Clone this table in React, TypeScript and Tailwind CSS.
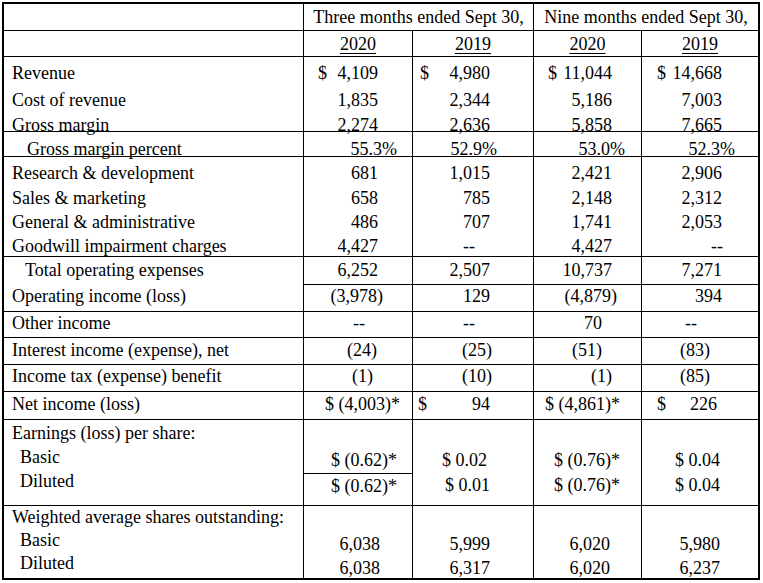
import React from 'react';

type V = { t: string; pr: string; d?: string };
type Row = { label: string; lpl: string; h: string; pt: string; b: 'all' | 'vals' | 'none'; v: V[] };

const COLW = [
  'w-[109px] border-r border-black',
  'w-[121px] border-r border-black',
  'w-[108px] border-r border-black',
  'w-[116px]',
];

const rows: Row[] = [
  {
    label: 'Revenue', lpl: 'pl-[8px]', h: 'h-[30px]', pt: 'pt-[7px]', b: 'none',
    v: [
      { t: '4,109', pr: 'pr-[34px]', d: 'pl-[14px]' },
      { t: '4,980', pr: 'pr-[43px]', d: 'pl-[7px]' },
      { t: '11,044', pr: 'pr-[29px]', d: 'pl-[14px]' },
      { t: '14,668', pr: 'pr-[36px]', d: 'pl-[15px]' },
    ],
  },
  {
    label: 'Cost of revenue', lpl: 'pl-[8px]', h: 'h-[25px]', pt: 'pt-[4px]', b: 'none',
    v: [
      { t: '1,835', pr: 'pr-[34px]' },
      { t: '2,344', pr: 'pr-[43px]' },
      { t: '5,186', pr: 'pr-[29px]' },
      { t: '7,003', pr: 'pr-[36px]' },
    ],
  },
  {
    label: 'Gross margin', lpl: 'pl-[8px]', h: 'h-[20px]', pt: 'pt-[4px]', b: 'all',
    v: [
      { t: '2,274', pr: 'pr-[34px]' },
      { t: '2,636', pr: 'pr-[43px]' },
      { t: '5,858', pr: 'pr-[29px]' },
      { t: '7,665', pr: 'pr-[36px]' },
    ],
  },
  {
    label: 'Gross margin percent', lpl: 'pl-[23px]', h: 'h-[25px]', pt: 'pt-[8px]', b: 'all',
    v: [
      { t: '55.3%', pr: 'pr-[15px]' },
      { t: '52.9%', pr: 'pr-[36px]' },
      { t: '53.0%', pr: 'pr-[16px]' },
      { t: '52.3%', pr: 'pr-[23px]' },
    ],
  },
  {
    label: 'Research & development', lpl: 'pl-[8px]', h: 'h-[26px]', pt: 'pt-[7px]', b: 'none',
    v: [
      { t: '681', pr: 'pr-[34px]' },
      { t: '1,015', pr: 'pr-[43px]' },
      { t: '2,421', pr: 'pr-[29px]' },
      { t: '2,906', pr: 'pr-[36px]' },
    ],
  },
  {
    label: 'Sales & marketing', lpl: 'pl-[8px]', h: 'h-[24px]', pt: 'pt-[6px]', b: 'none',
    v: [
      { t: '658', pr: 'pr-[34px]' },
      { t: '785', pr: 'pr-[43px]' },
      { t: '2,148', pr: 'pr-[29px]' },
      { t: '2,312', pr: 'pr-[36px]' },
    ],
  },
  {
    label: 'General & administrative', lpl: 'pl-[8px]', h: 'h-[24px]', pt: 'pt-[6px]', b: 'none',
    v: [
      { t: '486', pr: 'pr-[34px]' },
      { t: '707', pr: 'pr-[43px]' },
      { t: '1,741', pr: 'pr-[29px]' },
      { t: '2,053', pr: 'pr-[36px]' },
    ],
  },
  {
    label: 'Goodwill impairment charges', lpl: 'pl-[8px]', h: 'h-[26px]', pt: 'pt-[6px]', b: 'all',
    v: [
      { t: '4,427', pr: 'pr-[34px]' },
      { t: '--', pr: 'pr-[58px]' },
      { t: '4,427', pr: 'pr-[29px]' },
      { t: '--', pr: 'pr-[35px]' },
    ],
  },
  {
    label: 'Total operating expenses', lpl: 'pl-[21px]', h: 'h-[28px]', pt: 'pt-[4px]', b: 'vals',
    v: [
      { t: '6,252', pr: 'pr-[34px]' },
      { t: '2,507', pr: 'pr-[43px]' },
      { t: '10,737', pr: 'pr-[29px]' },
      { t: '7,271', pr: 'pr-[36px]' },
    ],
  },
  {
    label: 'Operating income (loss)', lpl: 'pl-[8px]', h: 'h-[27px]', pt: 'pt-[2px]', b: 'all',
    v: [
      { t: '(3,978)', pr: 'pr-[29px]' },
      { t: '129', pr: 'pr-[43px]' },
      { t: '(4,879)', pr: 'pr-[24px]' },
      { t: '394', pr: 'pr-[36px]' },
    ],
  },
  {
    label: 'Other income', lpl: 'pl-[8px]', h: 'h-[26px]', pt: 'pt-[2px]', b: 'all',
    v: [
      { t: '--', pr: 'pr-[47px]' },
      { t: '--', pr: 'pr-[58px]' },
      { t: '70', pr: 'pr-[39px]' },
      { t: '--', pr: 'pr-[61px]' },
    ],
  },
  {
    label: 'Interest income (expense), net', lpl: 'pl-[8px]', h: 'h-[27px]', pt: 'pt-[3px]', b: 'all',
    v: [
      { t: '(24)', pr: 'pr-[35px]' },
      { t: '(25)', pr: 'pr-[41px]' },
      { t: '(51)', pr: 'pr-[39px]' },
      { t: '(83)', pr: 'pr-[48px]' },
    ],
  },
  {
    label: 'Income tax (expense) benefit', lpl: 'pl-[8px]', h: 'h-[27px]', pt: 'pt-[2px]', b: 'all',
    v: [
      { t: '(1)', pr: 'pr-[39px]' },
      { t: '(10)', pr: 'pr-[41px]' },
      { t: '(1)', pr: 'pr-[29px]' },
      { t: '(85)', pr: 'pr-[48px]' },
    ],
  },
  {
    label: 'Net income (loss)', lpl: 'pl-[8px]', h: 'h-[28px]', pt: 'pt-[3px]', b: 'all',
    v: [
      { t: '$ (4,003)*', pr: 'pr-[12px]' },
      { t: '94', pr: 'pr-[43px]', d: 'pl-[5px]' },
      { t: '$ (4,861)*', pr: 'pr-[21px]' },
      { t: '226', pr: 'pr-[41px]', d: 'pl-[15px]' },
    ],
  },
];

function Cell({ v }: { v: V }) {
  if (v.d) {
    return (
      <div className={`flex w-full justify-between ${v.d} ${v.pr}`}>
        <span>$</span>
        <span>{v.t}</span>
      </div>
    );
  }
  return <div className={`w-full text-right ${v.pr}`}>{v.t}</div>;
}

export default function App() {
  return (
    <div className="min-h-screen bg-white pl-[2px] pt-[2px] font-['Liberation_Serif',serif] text-[18px] leading-none text-black">
      <div className="w-[758px] border-2 border-black">
        {/* header */}
        <div className="flex h-[27px] border-b border-black">
          <div className="w-[300px] shrink-0 border-r border-black" />
          <div className="flex w-[230px] shrink-0 items-center justify-center border-r border-black">
            Three months ended Sept 30,
          </div>
          <div className="flex w-[224px] shrink-0 items-center justify-center">
            Nine months ended Sept 30,
          </div>
        </div>
        <div className="flex h-[26px] border-b border-black">
          <div className="w-[300px] shrink-0 border-r border-black" />
          {['2020', '2019', '2020', '2019'].map((y, i) => (
            <div key={i} className={`${COLW[i]} flex shrink-0 items-center justify-center`}>
              <span className="underline decoration-1 underline-offset-[3px]">{y}</span>
            </div>
          ))}
        </div>

        {rows.map((r, ri) => (
          <div key={ri} className={`flex ${r.h} ${r.b === 'all' ? 'border-b border-black' : ''}`}>
            <div className={`w-[300px] shrink-0 border-r border-black ${r.pt} ${r.lpl}`}>
              {r.label}
            </div>
            {r.v.map((v, i) => (
              <div
                key={i}
                className={`${COLW[i]} shrink-0 ${r.pt} ${r.b === 'vals' ? 'border-b border-black' : ''}`}
              >
                <Cell v={v} />
              </div>
            ))}
          </div>
        ))}

        {/* earnings per share */}
        <div className="flex h-[86px] border-b border-black">
          <div className="w-[300px] shrink-0 border-r border-black pt-[1px] leading-[24px]">
            <div className="pl-[8px]">Earnings (loss) per share:</div>
            <div className="pl-[16px]">Basic</div>
            <div className="pl-[16px]">Diluted</div>
          </div>
          <div className={`${COLW[0]} shrink-0 pt-[28px] leading-[25px]`}>
            <div className="border-b border-black pr-[15px] text-right">$ (0.62)*</div>
            <div className="pr-[15px] text-right">$ (0.62)*</div>
          </div>
          <div className={`${COLW[1]} shrink-0 pt-[28px] leading-[25px]`}>
            <div className="pr-[46px] text-right">$ 0.02</div>
            <div className="pr-[43px] text-right">$ 0.01</div>
          </div>
          <div className={`${COLW[2]} shrink-0 pt-[28px] leading-[25px]`}>
            <div className="pr-[21px] text-right">$ (0.76)*</div>
            <div className="pr-[21px] text-right">$ (0.76)*</div>
          </div>
          <div className={`${COLW[3]} shrink-0 pt-[28px] leading-[25px]`}>
            <div className="pr-[38px] text-right">$ 0.04</div>
            <div className="pr-[38px] text-right">$ 0.04</div>
          </div>
        </div>

        {/* weighted shares */}
        <div className="flex h-[72px]">
          <div className="w-[300px] shrink-0 border-r border-black leading-[23px]">
            <div className="pl-[8px]">Weighted average shares outstanding:</div>
            <div className="pl-[16px]">Basic</div>
            <div className="pl-[16px]">Diluted</div>
          </div>
          <div className={`${COLW[0]} shrink-0 pt-[26px] leading-[24px]`}>
            <div className="pr-[32px] text-right">6,038</div>
            <div className="pr-[32px] text-right">6,038</div>
          </div>
          <div className={`${COLW[1]} shrink-0 pt-[26px] leading-[24px]`}>
            <div className="pr-[43px] text-right">5,999</div>
            <div className="pr-[43px] text-right">6,317</div>
          </div>
          <div className={`${COLW[2]} shrink-0 pt-[26px] leading-[24px]`}>
            <div className="pr-[31px] text-right">6,020</div>
            <div className="pr-[31px] text-right">6,020</div>
          </div>
          <div className={`${COLW[3]} shrink-0 pt-[26px] leading-[24px]`}>
            <div className="pr-[38px] text-right">5,980</div>
            <div className="pr-[38px] text-right">6,237</div>
          </div>
        </div>
      </div>
    </div>
  );
}
